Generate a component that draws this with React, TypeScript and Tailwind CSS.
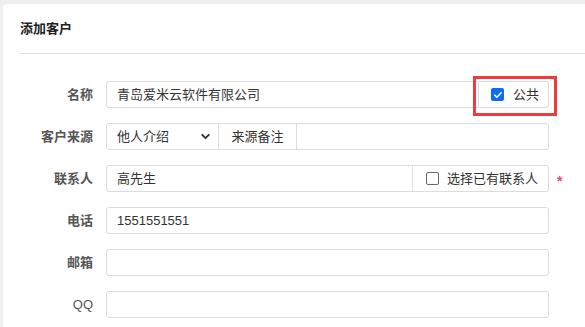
import { ChevronDown } from "lucide-react";

const font = { fontFamily: '"Liberation Sans", "Noto Sans CJK SC", sans-serif' };

const Label = ({ text, light }: { text: string; light?: boolean }) => (
  <div className={`w-[90px] shrink-0 text-right text-[13px] text-[#555] ${light ? "font-normal text-[#444]" : "font-bold"}`}>
    {text}
  </div>
);

const Checkbox = ({ checked }: { checked?: boolean }) =>
  checked ? (
    <span className="flex h-[13px] w-[13px] items-center justify-center rounded-[2px] bg-[#0b6cf5]">
      <svg viewBox="0 0 12 12" className="h-[10px] w-[10px]">
        <path d="M2.2 6.3l2.4 2.4 5.2-5.4" fill="none" stroke="white" strokeWidth="2" strokeLinecap="round" strokeLinejoin="round" />
      </svg>
    </span>
  ) : (
    <span className="h-[13px] w-[13px] rounded-[2px] border border-[#666] bg-white" />
  );

const App = () => {
  return (
    <div className="h-[327px] w-[585px] overflow-hidden bg-[#efefef] pl-[3px] pt-[4px] text-[#333]" style={font}>
      <div className="h-[400px] w-[640px] rounded-[4px] bg-white">
        {/* header */}
        <div className="ml-[17px] flex h-[50px] items-center border-b border-[#dadde6]">
          <h1 className="text-[13px] font-bold text-[#222]">添加客户</h1>
        </div>

        <div className="flex flex-col gap-[15px] pt-[27px]">
          {/* 名称 */}
          <div className="flex items-center gap-[13px]">
            <Label text="名称" />
            <div className="flex h-[27px]">
              <div className="flex w-[373px] items-center rounded-l-[3px] border border-[#d9dce3] px-[10px] text-[13px]">
                青岛爱米云软件有限公司
              </div>
              <div className="relative flex w-[70px] items-center gap-[9px] rounded-r-[3px] border border-l-0 border-[#d9dce3] pl-[12px] text-[13px]">
                <Checkbox checked />
                公共
                <div className="absolute -top-[6px] -right-[9px] -bottom-[9px] -left-[6px] border-[3px] border-[#ee3b3b]" />
              </div>
            </div>
          </div>

          {/* 客户来源 */}
          <div className="flex items-center gap-[13px]">
            <Label text="客户来源" />
            <div className="flex h-[27px]">
              <div className="flex w-[113px] items-center justify-between rounded-l-[3px] border border-[#d9dce3] pl-[10px] pr-[6px] text-[13px]">
                他人介绍
                <ChevronDown className="h-[13px] w-[13px]" strokeWidth={3.5} />
              </div>
              <div className="flex w-[78px] items-center justify-center border border-l-0 border-[#d9dce3] text-[13px]">
                来源备注
              </div>
              <div className="w-[252px] rounded-r-[3px] border border-l-0 border-[#d9dce3]" />
            </div>
          </div>

          {/* 联系人 */}
          <div className="flex items-center gap-[13px]">
            <Label text="联系人" />
            <div className="flex h-[27px]">
              <div className="flex w-[307px] items-center rounded-l-[3px] border border-[#d9dce3] px-[10px] text-[13px]">
                高先生
              </div>
              <div className="flex w-[136px] items-center gap-[8px] rounded-r-[3px] border border-l-0 border-[#d9dce3] pl-[13px] text-[13px]">
                <Checkbox />
                选择已有联系人
              </div>
            </div>
            <span className="-ml-[5px] mt-[6px] text-[14px] font-bold text-[#f0447a]">*</span>
          </div>

          {/* 电话 */}
          <div className="flex items-center gap-[13px]">
            <Label text="电话" />
            <div className="flex h-[27px] w-[443px] items-center rounded-[3px] border border-[#d9dce3] px-[10px] text-[13px]">
              1551551551
            </div>
          </div>

          {/* 邮箱 */}
          <div className="flex items-center gap-[13px]">
            <Label text="邮箱" />
            <div className="h-[27px] w-[443px] rounded-[3px] border border-[#d9dce3]" />
          </div>

          {/* QQ */}
          <div className="flex items-center gap-[13px]">
            <Label text="QQ" light />
            <div className="h-[27px] w-[443px] rounded-[3px] border border-[#d9dce3]" />
          </div>
        </div>
      </div>
    </div>
  );
};

export default App;
